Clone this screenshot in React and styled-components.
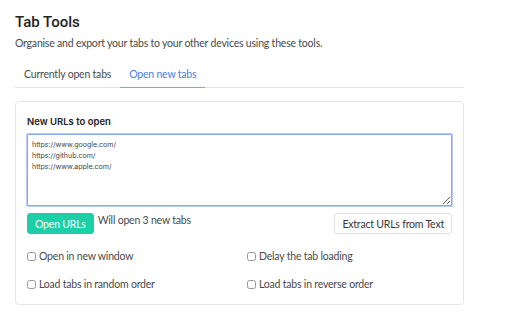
import styled, { createGlobalStyle } from 'styled-components';

const GlobalStyle = createGlobalStyle`
  body {
    margin: 0;
    background: #fff;
    font-family: Lato, "Noto Sans", sans-serif;
    color: #4a4a4a;
  }
`;

const Page = styled.div`
  width: 449px;
  padding: 13px 0 0 15px;
`;

const Title = styled.h1`
  margin: 0;
  font-family: Roboto, "Liberation Sans", sans-serif;
  font-size: 15px;
  font-weight: 500;
  color: #222;
  line-height: 19px;
`;

const Subtitle = styled.p`
  margin: 4px 0 0;
  font-size: 10.5px;
  letter-spacing: -0.2px;
  line-height: 14px;
  color: #4a4a4a;
`;

const TabBar = styled.div`
  display: flex;
  margin-top: 12px;
  border-bottom: 1px solid #e3e3e3;
`;

const Tab = styled.div`
  padding: 5px 9px 6px;
  font-size: 10.5px;
  letter-spacing: -0.2px;
  line-height: 14px;
  color: ${p => (p.$active ? '#4a7fe2' : '#4a4a4a')};
  border-bottom: 1px solid ${p => (p.$active ? '#7fa3ec' : 'transparent')};
  margin-bottom: -1px;
`;

const Card = styled.div`
  margin-top: 13px;
  border: 1px solid #e6e6e6;
  border-radius: 4px;
  padding: 13px 11px 13px;
  box-shadow: 0 1px 1px rgba(0, 0, 0, 0.05);
`;

const Label = styled.div`
  font-family: Inter, "Liberation Sans", sans-serif;
  font-size: 9.5px;
  font-weight: 600;
  color: #222;
  line-height: 13px;
`;

const UrlBox = styled.textarea`
  display: block;
  box-sizing: border-box;
  width: 100%;
  height: 72px;
  margin-top: 6px;
  padding: 4px 4px;
  border: 1px solid #8aa9ea;
  box-shadow: 0 0 0 1px #b8ccf4;
  border-radius: 1px;
  outline: none;
  resize: vertical;
  font-family: Inter, "Liberation Sans", sans-serif;
  font-size: 7px;
  line-height: 11px;
  color: #444;
`;

const Actions = styled.div`
  display: flex;
  align-items: flex-start;
  margin-top: 7px;
`;

const Button = styled.button`
  height: 21px;
  padding: 0 7px;
  border-radius: 3px;
  font-family: Lato, "Noto Sans", sans-serif;
  font-size: 10.5px;
  letter-spacing: -0.2px;
  border: 1px solid ${p => (p.$primary ? '#1ccfa6' : '#e0e0e0')};
  background: ${p => (p.$primary ? '#1ccfa6' : '#fff')};
  color: ${p => (p.$primary ? '#fff' : '#363636')};
`;

const Hint = styled.span`
  margin-left: 4px;
  font-size: 10.5px;
  letter-spacing: -0.2px;
  line-height: 14px;
  flex: 1;
`;

const Options = styled.div`
  display: grid;
  grid-template-columns: 220px 1fr;
  row-gap: 14px;
  margin-top: 15px;
`;

const Option = styled.label`
  display: flex;
  align-items: center;
  font-size: 10.5px;
  letter-spacing: -0.2px;
  line-height: 14px;
  color: #4a4a4a;
`;

const Check = styled.input.attrs({ type: 'checkbox' })`
  width: 9px;
  height: 9px;
  margin: 0 3px 0 0;
  opacity: 0.75;
`;

export default function App() {
  return (
    <>
      <GlobalStyle />
      <Page>
        <Title>Tab Tools</Title>
        <Subtitle>Organise and export your tabs to your other devices using these tools.</Subtitle>
        <TabBar>
          <Tab>Currently open tabs</Tab>
          <Tab $active>Open new tabs</Tab>
        </TabBar>
        <Card>
          <Label>New URLs to open</Label>
          <UrlBox defaultValue={'https://www.google.com/\nhttps://github.com/\nhttps://www.apple.com/'} />
          <Actions>
            <Button $primary>Open URLs</Button>
            <Hint>Will open 3 new tabs</Hint>
            <Button>Extract URLs from Text</Button>
          </Actions>
          <Options>
            <Option><Check />Open in new window</Option>
            <Option><Check />Delay the tab loading</Option>
            <Option><Check />Load tabs in random order</Option>
            <Option><Check />Load tabs in reverse order</Option>
          </Options>
        </Card>
      </Page>
    </>
  );
}
